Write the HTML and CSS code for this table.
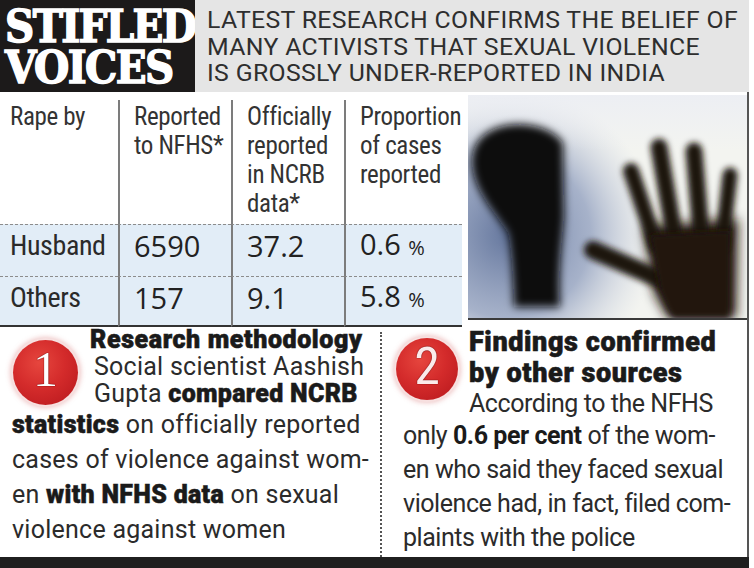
FILE: index.html
```html
<!DOCTYPE html>
<html lang="en">
<head>
<meta charset="utf-8">
<title>Stifled Voices</title>
<link rel="stylesheet" href="styles.css">
</head>
<body>
<div class="page">
  <header class="top">
    <h1 class="title"><span class="tl">STIFLED</span><span class="tl">VOICES</span></h1>
    <p class="deck">LATEST RESEARCH CONFIRMS THE BELIEF OF<br>MANY ACTIVISTS THAT SEXUAL VIOLENCE<br>IS GROSSLY UNDER-REPORTED IN INDIA</p>
  </header>
  <div class="frame">
    <section class="mid">
      <table class="data">
        <colgroup><col class="c1"><col class="c2"><col class="c3"><col class="c4"></colgroup>
        <thead>
          <tr>
            <th class="first">Rape by</th>
            <th>Reported<br>to NFHS*</th>
            <th>Officially<br>reported<br>in NCRB<br>data*</th>
            <th>Proportion<br>of cases<br>reported</th>
          </tr>
        </thead>
        <tbody>
          <tr class="r1">
            <td class="lab">Husband</td>
            <td class="num">6590</td>
            <td class="num">37.2</td>
            <td class="num">0.6 <span class="pct">%</span></td>
          </tr>
          <tr class="r2">
            <td class="lab">Others</td>
            <td class="num">157</td>
            <td class="num">9.1</td>
            <td class="num">5.8 <span class="pct">%</span></td>
          </tr>
        </tbody>
      </table>
      <div class="photo">
        <svg width="279" height="223" viewBox="0 0 279 223" aria-hidden="true">
          <defs>
            <radialGradient id="halo" cx="40" cy="140" r="150" gradientUnits="userSpaceOnUse">
              <stop offset="0" stop-color="#5d7099" stop-opacity="0.95"/>
              <stop offset="0.55" stop-color="#8d9cbd" stop-opacity="0.75"/>
              <stop offset="1" stop-color="#c9d0e0" stop-opacity="0"/>
            </radialGradient>
            <linearGradient id="topl" x1="0" y1="0" x2="0" y2="1">
              <stop offset="0" stop-color="#eceef4" stop-opacity="0.9"/>
              <stop offset="0.25" stop-color="#eceef4" stop-opacity="0"/>
            </linearGradient>
            <filter id="b4" x="-40%" y="-40%" width="180%" height="180%"><feGaussianBlur stdDeviation="4"/></filter>
            <filter id="b3" x="-30%" y="-30%" width="160%" height="160%"><feGaussianBlur stdDeviation="3"/></filter>
            <filter id="b6" x="-30%" y="-30%" width="160%" height="160%"><feGaussianBlur stdDeviation="6"/></filter>
          </defs>
          <rect width="279" height="223" fill="#f3f4f0"/>
          <rect width="279" height="223" fill="url(#halo)"/>
          <rect width="279" height="223" fill="url(#topl)"/>
          <path d="M22 36 C42 24 82 28 95 48 L96 122 C94 150 90 172 92 212 L46 212 C45 178 43 152 40 138 C27 118 6 96 4 70 C3 54 10 42 22 36 Z" fill="#0a0a0e" filter="url(#b4)"/>
          <path d="M176 132 L270 124 L268 223 L200 223 L186 198 Z" fill="#21160e" filter="url(#b6)"/>
          <g filter="url(#b3)" stroke="#1f150e" stroke-linecap="round" fill="none">
            <line x1="163" y1="76" x2="188" y2="150" stroke-width="16"/>
            <line x1="191" y1="52" x2="208" y2="150" stroke-width="17"/>
            <line x1="226" y1="56" x2="234" y2="150" stroke-width="17"/>
            <line x1="262" y1="80" x2="254" y2="150" stroke-width="15"/>
            <line x1="125" y1="155" x2="196" y2="186" stroke-width="18"/>
          </g>
          <path d="M182 140 L262 136 L262 223 L204 223 L192 196 Z" fill="#20150e" filter="url(#b3)"/>
        </svg>
      </div>
    </section>
    <section class="notes">
      <div class="note left">
        <div class="head">
          <div class="badge b1"><span>1</span></div>
          <div class="hl">
            <span class="ln t27 heading">Research methodology</span>
            <span class="ln t27 ind">Social scientist Aashish</span>
            <span class="ln t27 ind">Gupta <b>compared NCRB</b></span>
          </div>
        </div>
        <span class="ln t35"><b>statistics</b> on officially reported</span>
        <span class="ln t35">cases of violence against wom-</span>
        <span class="ln t35">en <b>with NFHS data</b> on sexual</span>
        <span class="ln t35">violence against women</span>
      </div>
      <div class="divider"></div>
      <div class="note right">
        <div class="head">
          <div class="badge b2"><span>2</span></div>
          <div class="hl">
            <span class="ln t31 heading big">Findings confirmed</span>
            <span class="ln t31 heading big">by other sources</span>
            <span class="ln t30">According to the NFHS</span>
          </div>
        </div>
        <span class="ln t34">only <strong>0.6 per cent</strong> of the wom-</span>
        <span class="ln t34">en who said they faced sexual</span>
        <span class="ln t34">violence had, in fact, filed com-</span>
        <span class="ln t34">plaints with the police</span>
      </div>
    </section>
  </div>
  <div class="footbar"></div>
</div>
</body>
</html>
```

FILE: styles.css
```css
* { box-sizing: border-box; margin: 0; padding: 0; }
html, body { width: 754px; height: 568px; overflow: hidden; background: #fff; }
body { font-family: Roboto, "Liberation Sans", sans-serif; color: #2b2b2b; }

.page { width: 754px; height: 568px; display: flex; flex-direction: column; }

/* header */
.top { display: flex; width: 749px; height: 92px; flex: none; }
.title {
  width: 195px; flex: none;
  background: #1c1a1a; color: #fff;
  font-family: "DejaVu Serif Condensed", "DejaVu Serif", serif;
  font-stretch: condensed; font-weight: 700;
  font-size: 45px; line-height: 41px; letter-spacing: -1.6px;
  padding: 6px 0 0 5px;
  -webkit-text-stroke: 1.4px #fff;
  white-space: nowrap;
}
.tl { display: block; }
.deck {
  flex: 1; background: #e5e5e5; color: #2e2e2e;
  font-size: 24.8px; line-height: 26.5px; letter-spacing: 0.35px;
  padding: 7px 0 0 12px; white-space: nowrap;
}

/* frame */
.frame { width: 749px; border-right: 2px solid #555; flex: none; }

.mid { display: flex; height: 228px; }
.data {
  width: 462px; flex: none; align-self: flex-start;
  margin-top: 8px;
  border-collapse: separate; border-spacing: 0; table-layout: fixed;
}
.c1 { width: 118px; }
.c2 { width: 113px; }
.c3 { width: 113px; }
.c4 { width: 118px; }

.data th {
  font-family: "Liberation Sans Narrow", "Roboto Condensed", "DejaVu Sans Condensed", Roboto, sans-serif;
  font-weight: 400; font-size: 25px; line-height: 29px; color: #333;
  letter-spacing: -0.35px;
  text-align: left; vertical-align: top;
  padding: 2px 0 6px 14px; height: 124px;
  border-left: 2px solid #7c7c7c; white-space: nowrap;
}
.data td {
  border-left: 2px solid #7c7c7c;
  border-top: 1px dashed #8c8c8c;
  background: #e2edf7;
  line-height: 38px; white-space: nowrap; color: #222;
}
.data th.first, .data td.lab { border-left: 0; padding-left: 10px; }
.data .r1 td { padding-bottom: 9px; }
.data .r2 td { padding-bottom: 6px; border-bottom: 2px solid #333; }
.data td.lab {
  font-family: "Liberation Sans Narrow", "Roboto Condensed", "DejaVu Sans Condensed", Roboto, sans-serif;
  font-size: 28px; letter-spacing: -0.4px; color: #2a2a2a;
}
.data td.num { font-family: "Open Sans", Roboto, sans-serif; font-size: 29px; padding-left: 14px; }
.pct { font-size: 20px; }

.photo {
  width: 279px; height: 225px; flex: none;
  margin: 3px 0 0 6px;
  border-bottom: 2px solid #3a3a3a;
}
.photo svg { display: block; }

/* notes */
.notes { display: grid; grid-template-columns: 380px 2px 1fr; height: 237px; }
.divider { border-left: 2px dotted #555; margin-top: 12px; }
.note { font-size: 25px; color: #2b2b2b; }
.note.left { padding: 6px 0 0 12px; letter-spacing: 0.25px; }
.note.right { padding: 7px 0 0 21px; letter-spacing: -0.45px; }
.head { display: flex; }
.left .head { margin-left: 1px; gap: 12px; }
.right .head { margin-left: -7px; gap: 11px; }
.ln { display: block; white-space: nowrap; }
.t27 { line-height: 27px; }
.t30 { line-height: 30px; }
.t31 { line-height: 31px; }
.t34 { line-height: 34px; }
.t35 { line-height: 35px; }
.ind { padding-left: 4px; }
.heading {
  font-weight: 900; color: #1a1a1a; letter-spacing: 0.6px;
  -webkit-text-stroke: 0.6px #1a1a1a;
}
.heading.big { font-size: 27px; letter-spacing: 0.6px; }
.note b { font-weight: 900; color: #1a1a1a; -webkit-text-stroke: 0.5px #1a1a1a; letter-spacing: 0.3px; }
.note strong { font-weight: 700; color: #1a1a1a; }

.badge {
  flex: none; border-radius: 50%;
  display: flex; align-items: center; justify-content: center;
  background: radial-gradient(circle at 40% 35%, #e6463e 0%, #d42b2b 45%, #b5161c 100%);
  box-shadow: 0 0 0 2px #f7e0e0, 0 0 5px 3px rgba(205, 90, 90, 0.35);
  color: #fff;
}
.b1 { width: 65px; height: 65px; margin-top: 14px; }
.b2 { width: 62px; height: 62px; margin-top: 11px; }
.b1 span {
  font-family: "Liberation Serif", serif; font-size: 50px; line-height: 1;
  margin-top: -8px; text-shadow: 0 0 1px #6b0000, 0 0 1px #6b0000;
}
.b2 span {
  font-family: "Liberation Sans Narrow", "Roboto Condensed", Roboto, sans-serif;
  font-weight: 400;
  font-size: 52px; line-height: 1; margin-top: -4px; color: #fbeaea;
  letter-spacing: 0;
  text-shadow: 0 0 1px #6b0000, 0 0 1px #6b0000;
}

.footbar { width: 749px; height: 11px; background: #1f1f1f; flex: none; }
```
